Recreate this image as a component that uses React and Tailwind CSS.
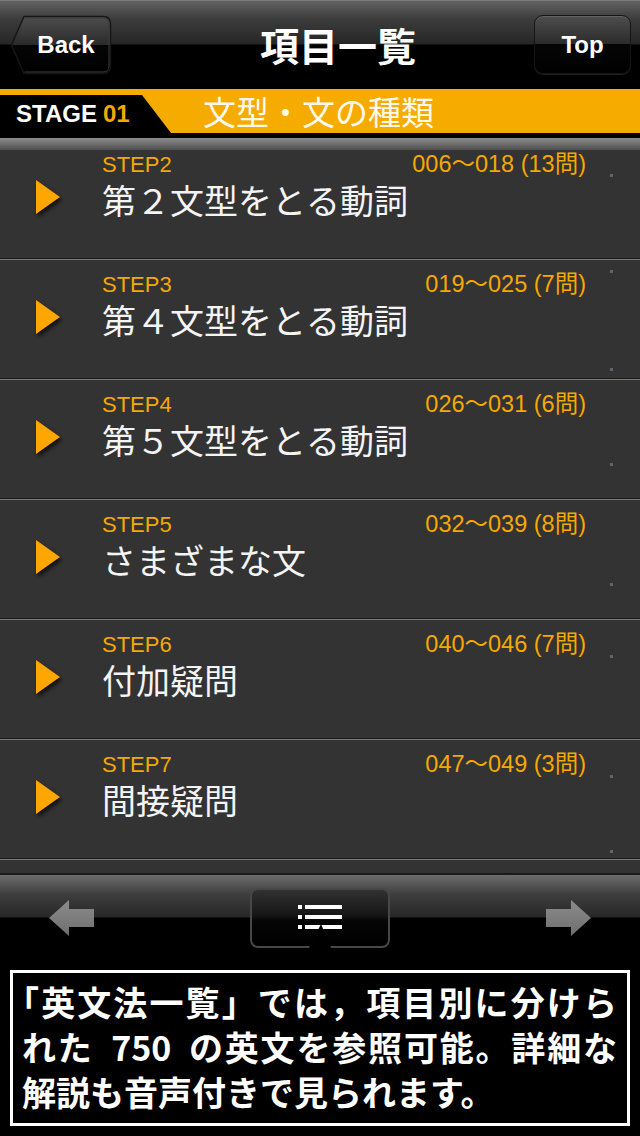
import React from 'react';

const rows = [
  { step: 'STEP2', range: '006〜018 (13問)', title: '第２文型をとる動詞', dots: [35] },
  { step: 'STEP3', range: '019〜025 (7問)', title: '第４文型をとる動詞', dots: [11, 109] },
  { step: 'STEP4', range: '026〜031 (6問)', title: '第５文型をとる動詞', dots: [84] },
  { step: 'STEP5', range: '032〜039 (8問)', title: 'さまざまな文', dots: [84] },
  { step: 'STEP6', range: '040〜046 (7問)', title: '付加疑問', dots: [36] },
  { step: 'STEP7', range: '047〜049 (3問)', title: '間接疑問', dots: [36, 111] },
];

function BackButton() {
  return (
    <div className="relative w-[102px] h-[60px] ml-[10px] mt-[14px]">
      <svg className="absolute inset-0" width="102" height="60" viewBox="0 0 102 60">
        <defs>
          <linearGradient id="bb" x1="0" y1="0" x2="0" y2="1">
            <stop offset="0" stopColor="#4e4e4e" />
            <stop offset="0.5" stopColor="#2a2a2a" />
            <stop offset="0.5" stopColor="#050505" />
            <stop offset="1" stopColor="#000" />
          </linearGradient>
        </defs>
        <path d="M14 1.5 H93 Q100.5 1.5 100.5 9 V51 Q100.5 58.5 93 58.5 H14 L1.5 30 Z" fill="url(#bb)" stroke="#161616" strokeWidth="1.5" />
        <path d="M14.5 3 H93 Q99 3 99 9 V51 Q99 57 93 57 H14.5" fill="none" stroke="#3c3c3c" strokeWidth="1" />
      </svg>
      <div className="relative h-full flex items-center justify-center pl-[10px] text-white text-[24px] font-bold font-['Liberation_Sans',sans-serif]">
        Back
      </div>
    </div>
  );
}

function Row({ row, first }) {
  return (
    <div className={`relative h-[120px] shrink-0 bg-[#333333] border-t border-t-[#777777] border-b border-b-[#1c1c1c] flex ${first ? 'mt-[-11px]' : ''}`}>
      <svg className="ml-[36px] mt-[40px] drop-shadow-[2px_3px_2px_rgba(0,0,0,0.7)]" width="24" height="34" viewBox="0 0 24 34">
        <polygon points="0,0 24,17 0,34" fill="#ffa600" />
      </svg>
      <div className="ml-[42px] w-[484px] pt-[13px] flex flex-col">
        <div className="flex justify-between items-baseline text-[#f5a800] leading-none font-['Liberation_Sans','Noto_Sans_CJK_JP',sans-serif]">
          <span className="text-[22px]">{row.step}</span>
          <span className="text-[23.5px]">{row.range}</span>
        </div>
        <div className="mt-[6px] text-[34px] leading-none text-[#f4f4f4] whitespace-nowrap font-['Noto_Sans_CJK_JP',sans-serif]">
          {row.title}
        </div>
      </div>
      {row.dots.map((d) => (
        <div key={d} className="absolute left-[610px] w-[3px] h-[3px] bg-[#5d6472]" style={{ top: d - 1 }} />
      ))}
    </div>
  );
}

function Arrow({ flip }) {
  return (
    <svg width="45" height="36" viewBox="0 0 45 36" className={flip ? 'scale-x-[-1]' : ''}>
      <defs>
        <linearGradient id={flip ? 'ar' : 'al'} x1="0" y1="0" x2="0" y2="1">
          <stop offset="0" stopColor="#8c8c8c" />
          <stop offset="1" stopColor="#6e6e6e" />
        </linearGradient>
      </defs>
      <polygon points="0,18 20,0 20,9 45,9 45,27 20,27 20,36" fill={`url(#${flip ? 'ar' : 'al'})`} />
    </svg>
  );
}

function ListButton() {
  return (
    <div className="relative w-[140px] h-[60px]">
      <div className="absolute inset-0 rounded-[8px] border-2 border-[#474747] bg-[linear-gradient(180deg,#313131_0%,#161616_45%,#050505_55%,#000_100%)]" />
      <svg className="absolute inset-0" width="140" height="60" viewBox="0 0 140 60">
        <rect x="48" y="17" width="4" height="4" fill="#fff" />
        <rect x="55" y="17" width="37" height="4" fill="#fff" />
        <rect x="48" y="27" width="4" height="4" fill="#fff" />
        <rect x="55" y="27" width="37" height="4" fill="#fff" />
        <rect x="48" y="37" width="4" height="4" fill="#fff" />
        <rect x="55" y="37" width="37" height="4" fill="#fff" />
        <polygon points="59,60 71,36 81,60" fill="#000" />
      </svg>
    </div>
  );
}

export default function App() {
  return (
    <div className="w-[640px] h-[1136px] bg-black overflow-hidden flex flex-col">
      {/* Nav bar */}
      <div className="h-[89px] shrink-0 flex items-start border-t border-t-[#7a7a7a] bg-[linear-gradient(180deg,#626262_0px,#3c3c3c_18px,#262626_43px,#000_44px,#000_100%)]">
        <BackButton />
        <div className="flex-1 h-[88px] flex items-center justify-center pl-[30px] pb-[2px] text-white text-[39px] font-bold leading-none font-['Noto_Sans_CJK_JP',sans-serif]">
          項目一覧
        </div>
        <div className="w-[97px] h-[59px] mt-[14px] mr-[9px] rounded-[9px] border border-[#151515] shadow-[inset_0_1px_0_rgba(255,255,255,0.12),0_1px_0_rgba(255,255,255,0.12)] bg-[linear-gradient(180deg,#4e4e4e_0%,#2a2a2a_50%,#050505_50%,#000_100%)] flex items-center justify-center text-white text-[24px] font-bold font-['Liberation_Sans',sans-serif]">
          Top
        </div>
      </div>

      {/* Stage bar */}
      <div className="h-[44px] shrink-0 bg-[#f5ab00] flex items-start">
        <div className="w-[171px] h-[38px] mt-[6px] bg-black [clip-path:polygon(0_0,142px_0,171px_100%,0_100%)] flex items-center pl-[16px] text-[24px] font-bold leading-none font-['Liberation_Sans',sans-serif]">
          <span className="text-white">STAGE</span>
          <span className="text-[#f5a800] ml-[6px]">01</span>
        </div>
        <div className="ml-[32px] h-[44px] flex items-center text-[33px] leading-none text-[#fff9ea] font-['Noto_Sans_CJK_JP',sans-serif]">
          文型・文の種類
        </div>
      </div>
      <div className="h-[5px] shrink-0 bg-black" />
      <div className="h-[12px] shrink-0 bg-[linear-gradient(180deg,#8e8e8e,#4e4e4e)]" />

      {/* List */}
      <div className="h-[723px] shrink-0 overflow-hidden flex flex-col bg-[#333333]">
        {rows.map((row, i) => (
          <Row key={row.step} row={row} first={i === 0} />
        ))}
        <div className="h-[120px] shrink-0 bg-[#333333] border-t border-t-[#777777]" />
      </div>

      {/* Toolbar */}
      <div className="h-[87px] shrink-0 border-t-2 border-t-[#1a1a1a] bg-[linear-gradient(180deg,#6c6c6c_0px,#3d3d3d_20px,#272727_42px,#000_43px,#000_100%)] flex items-center justify-between px-[49px]">
        <Arrow />
        <ListButton />
        <Arrow flip />
      </div>

      {/* Info box */}
      <div className="pt-[10px] px-[10px]">
        <div className="h-[156px] border-[3px] border-white pl-[9px] pr-[10px] pt-[6px] text-white text-[34px] font-bold leading-none font-['Noto_Sans_CJK_JP',sans-serif]">
          <div className="h-[45px] flex items-center">
            <div className="w-full text-justify [text-align-last:justify]">
              <span className="ml-[-17px]">「</span>英文法一覧」では，項目別に分けら
            </div>
          </div>
          <div className="h-[45px] flex items-center">
            <div className="w-full text-justify [text-align-last:justify]">
              れた <span className="mx-[8px]">750</span> の英文を参照可能。詳細な
            </div>
          </div>
          <div className="h-[45px] flex items-center">
            <div>解説も音声付きで見られます。</div>
          </div>
        </div>
      </div>
    </div>
  );
}
